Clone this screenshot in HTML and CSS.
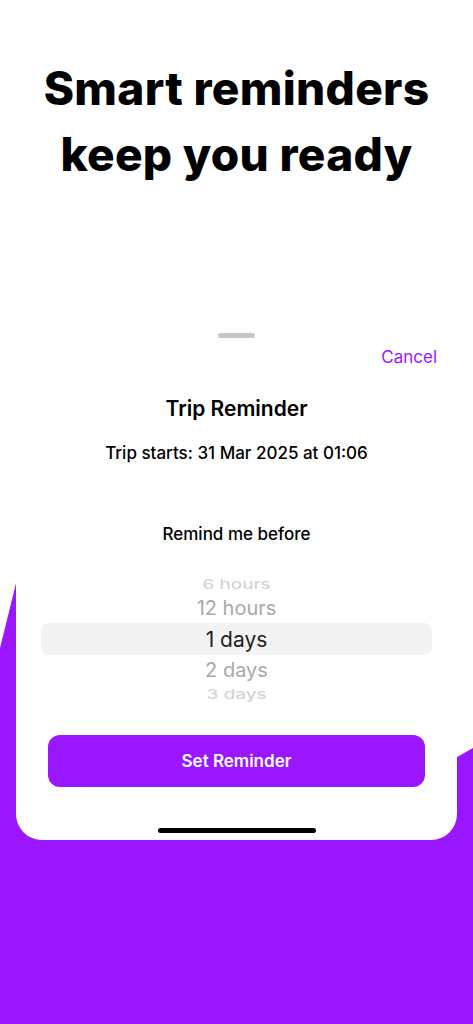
FILE: index.html
```html
<!DOCTYPE html>
<html>
    <head>
        <meta charset="utf-8" />
        <title>Smart reminders</title>
        <link rel="stylesheet" href="styles.css">
    </head>
    <body>
        <svg class="blob" viewBox="0 0 473 1024" preserveAspectRatio="none">
            <path d="M0,1024 L0,648 Q9,612 18,575 L420,778 L473,748 L473,1024 Z" fill="#9a16ff" />
        </svg>
        <main class="screen">
            <h1 class="headline">Smart reminders<br/>keep you ready</h1>

            <section class="sheet">
                <div class="grabber"></div>
                <div class="sheet-bar">
                    <span class="cancel">Cancel</span>
                </div>
                <h2 class="sheet-title">Trip Reminder</h2>
                <p class="trip-date">Trip starts: 31 Mar 2025 at 01:06</p>
                <p class="picker-label">Remind me before</p>

                <div class="picker">
                    <div class="pick far">6 hours</div>
                    <div class="pick near">12 hours</div>
                    <div class="pick selected">1 days</div>
                    <div class="pick near">2 days</div>
                    <div class="pick far">3 days</div>
                </div>

                <button class="set-btn">Set Reminder</button>
                <div class="home-bar"></div>
            </section>
        </main>
    </body>
</html>
```

FILE: styles.css
```css
html, body {
    margin: 0;
    padding: 0;
}

body {
    width: 473px;
    height: 1024px;
    overflow: hidden;
    position: relative;
    background-color: #ffffff;
    font-family: Inter, "Liberation Sans", sans-serif;
    color: #000000;
}

.blob {
    position: absolute;
    left: 0;
    top: 0;
    width: 473px;
    height: 1024px;
}

.screen {
    position: relative;
}

.headline {
    margin: 0;
    padding-top: 55px;
    font-size: 46px;
    line-height: 66px;
    font-weight: 800;
    letter-spacing: 0.3px;
    text-align: center;
}

.sheet {
    margin: 113px 16px 0 16px;
    padding: 33px 0 7px 0;
    background-color: #ffffff;
    border-radius: 0 0 26px 26px;
    display: flex;
    flex-direction: column;
    align-items: center;
}

.grabber {
    width: 37px;
    height: 5px;
    border-radius: 3px;
    background-color: #c6c6c6;
}

.sheet-bar {
    align-self: stretch;
    display: flex;
    justify-content: flex-end;
    margin-top: 8px;
    padding-right: 20px;
}

.cancel {
    font-size: 17px;
    line-height: 22px;
    color: #9a16ff;
}

.sheet-title {
    margin: 28px 0 0 0;
    font-size: 21px;
    line-height: 25px;
    font-weight: 600;
}

.trip-date {
    margin: 21px 0 0 0;
    font-size: 17px;
    line-height: 22px;
    font-weight: 500;
}

.picker-label {
    margin: 59px 0 0 0;
    font-size: 17px;
    line-height: 22px;
    font-weight: 500;
}

.picker {
    align-self: stretch;
    margin-top: 27px;
    padding: 0 25px;
    display: flex;
    flex-direction: column;
}

.pick {
    display: flex;
    align-items: center;
    justify-content: center;
    height: 24px;
}

.far {
    font-size: 19px;
    color: #cfcfcf;
    transform: scaleY(0.7);
}

.near {
    font-size: 20px;
    color: #a9a9a9;
}

.selected {
    height: 32px;
    margin: 3px 0;
    border-radius: 8px;
    background-color: #f3f3f3;
    font-size: 21px;
    color: #1e1e1e;
}

.set-btn {
    align-self: stretch;
    margin: 29px 32px 0 32px;
    height: 52px;
    border: none;
    border-radius: 12px;
    background-color: #9a16ff;
    color: #ffffff;
    font-family: Inter, "Liberation Sans", sans-serif;
    font-size: 17px;
    font-weight: 600;
}

.home-bar {
    margin-top: 41px;
    width: 158px;
    height: 5px;
    border-radius: 3px;
    background-color: #000000;
}
```
